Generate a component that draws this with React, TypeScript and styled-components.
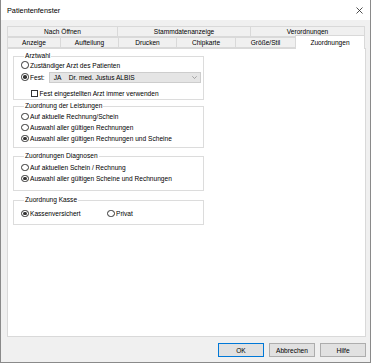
import React from "react";
import styled, { createGlobalStyle } from "styled-components";

const Global = createGlobalStyle`
  html, body { margin: 0; padding: 0; background: #f0f0f0; }
  * { box-sizing: border-box; }
`;

const Window = styled.div`
  width: 371px;
  height: 363px;
  background: #f0f0f0;
  border: 1px solid #8a8a8a;
  border-top: none;
  display: flex;
  flex-direction: column;
  font-family: "Liberation Sans", Arial, sans-serif;
  font-size: 6.6px;
  color: #000;
`;

const TitleBar = styled.div`
  height: 20px;
  background: #fff;
  display: flex;
  align-items: center;
  justify-content: space-between;
  padding: 0 6px 0 6px;
  font-size: 7.3px;
`;

const CloseIcon = styled.svg`
  width: 7px;
  height: 7px;
  margin-right: 1px;
`;

const Body = styled.div`
  flex: 1;
  display: flex;
  flex-direction: column;
  padding: 6px 4px 0 6px;
`;

const TabRow = styled.div`
  display: flex;
  height: 11px;
`;

const Tab = styled.div<{ $w: number; $active?: boolean }>`
  width: ${(p) => p.$w}px;
  flex: none;
  display: flex;
  align-items: center;
  justify-content: center;
  border: 1px solid #d9d9d9;
  border-right: none;
  background: ${(p) => (p.$active ? "#fff" : "#f0f0f0")};
  height: ${(p) => (p.$active ? "14px" : "11px")};
  margin-top: ${(p) => (p.$active ? "-2px" : "0")};
  border-bottom: ${(p) => (p.$active ? "none" : "1px solid #d9d9d9")};
  position: relative;
  z-index: ${(p) => (p.$active ? 2 : 0)};
  padding-bottom: ${(p) => (p.$active ? "1px" : "0")};
  &:last-child { border-right: 1px solid #d9d9d9; }
`;

const Panel = styled.div`
  height: 289px;
  background: #fff;
  border: 1px solid #d9d9d9;
  position: relative;
  z-index: 1;
  padding: 3px 0 0 5px;
  display: flex;
  flex-direction: column;
`;

const Group = styled.fieldset<{ $pb: number; $mt: number }>`
  width: 191px;
  margin: ${(p) => p.$mt}px 0 0 0;
  padding: 0 0 ${(p) => p.$pb}px 7px;
  border: 1px solid #dcdcdc;
  min-width: 0;
  display: flex;
  flex-direction: column;
`;

const Legend = styled.legend`
  font-size: 6.6px;
  line-height: 8px;
  padding: 0 1px;
  margin-left: 3px;
`;

const Row = styled.div<{ $h?: number; $mt?: number; $indent?: number }>`
  display: flex;
  align-items: center;
  height: ${(p) => p.$h ?? 11}px;
  margin-top: ${(p) => p.$mt ?? 0}px;
  padding-left: ${(p) => p.$indent ?? 0}px;
`;

const RadioLabel = styled.label<{ $w?: number }>`
  display: flex;
  align-items: center;
  gap: 1.5px;
  white-space: nowrap;
  width: ${(p) => (p.$w ? `${p.$w}px` : "auto")};
`;

const RadioCircle = styled.span<{ $on?: boolean }>`
  width: 7.5px;
  height: 7.5px;
  border-radius: 50%;
  border: 1px solid #333;
  background: #fff;
  display: flex;
  align-items: center;
  justify-content: center;
  flex: none;
  &::after {
    content: "";
    width: 3.5px;
    height: 3.5px;
    border-radius: 50%;
    background: ${(p) => (p.$on ? "#333" : "transparent")};
  }
`;

const CheckBox = styled.span`
  width: 7px;
  height: 7px;
  border: 1px solid #333;
  background: #fff;
  flex: none;
`;

const Select = styled.div`
  margin-left: 4px;
  width: 152px;
  height: 11px;
  background: #e5e5e5;
  border: 1px solid #cdcdcd;
  display: flex;
  align-items: center;
  padding-left: 4px;
  padding-right: 3px;
`;

const SelCode = styled.span`
  width: 15px;
`;

const SelName = styled.span`
  flex: 1;
`;

const Chevron = styled.svg`
  width: 5px;
  height: 3px;
`;

const ButtonBar = styled.div`
  display: flex;
  justify-content: flex-end;
  gap: 5px;
  margin-top: 6px;
`;

const Button = styled.div<{ $primary?: boolean }>`
  width: 46px;
  height: 14px;
  background: #e1e1e1;
  border: 1px solid ${(p) => (p.$primary ? "#0078d7" : "#adadad")};
  display: flex;
  align-items: center;
  justify-content: center;
`;

function Radio({ on, label, w }: { on?: boolean; label: string; w?: number }) {
  return (
    <RadioLabel $w={w}>
      <RadioCircle $on={on} />
      <span>{label}</span>
    </RadioLabel>
  );
}

export default function App() {
  return (
    <>
      <Global />
      <Window>
        <TitleBar>
          <span>Patientenfenster</span>
          <CloseIcon viewBox="0 0 7 7">
            <path d="M0.5 0.5 L6.5 6.5 M6.5 0.5 L0.5 6.5" stroke="#222" strokeWidth="0.8" />
          </CloseIcon>
        </TitleBar>
        <Body>
          <TabRow>
            <Tab $w={110}>Nach Öffnen</Tab>
            <Tab $w={133}>Stammdatenanzeige</Tab>
            <Tab $w={115}>Verordnungen</Tab>
          </TabRow>
          <TabRow>
            <Tab $w={53}>Anzeige</Tab>
            <Tab $w={58}>Aufteilung</Tab>
            <Tab $w={58}>Drucken</Tab>
            <Tab $w={59}>Chipkarte</Tab>
            <Tab $w={60}>Größe/Stil</Tab>
            <Tab $w={70} $active>Zuordnungen</Tab>
          </TabRow>
          <Panel>
            <Group $mt={0} $pb={1}>
              <Legend>Arztwahl</Legend>
              <Row $h={10}>
                <Radio label="Zuständiger Arzt des Patienten" />
              </Row>
              <Row $h={12} $mt={1}>
                <Radio on label="Fest:" />
                <Select>
                  <SelCode>JA</SelCode>
                  <SelName>Dr. med. Justus ALBIS</SelName>
                  <Chevron viewBox="0 0 5 3">
                    <path d="M0.3 0.3 L2.5 2.5 L4.7 0.3" fill="none" stroke="#888" strokeWidth="0.7" />
                  </Chevron>
                </Select>
              </Row>
              <Row $h={10} $mt={5} $indent={10}>
                <RadioLabel>
                  <CheckBox />
                  <span>Fest eingestellten Arzt immer verwenden</span>
                </RadioLabel>
              </Row>
            </Group>
            <Group $mt={2} $pb={3}>
              <Legend>Zuordnung der Leistungen</Legend>
              <Row $mt={1}><Radio label="Auf aktuelle Rechnung/Schein" /></Row>
              <Row><Radio label="Auswahl aller gültigen Rechnungen" /></Row>
              <Row><Radio on label="Auswahl aller gültigen Rechnungen und Scheine" /></Row>
            </Group>
            <Group $mt={4} $pb={6}>
              <Legend>Zuordnungen Diagnosen</Legend>
              <Row $mt={2}><Radio label="Auf aktuellen Schein / Rechnung" /></Row>
              <Row><Radio on label="Auswahl aller gültigen Scheine und Rechnungen" /></Row>
            </Group>
            <Group $mt={5} $pb={5}>
              <Legend>Zuordnung Kasse</Legend>
              <Row $mt={4}>
                <Radio on label="Kassenversichert" w={86} />
                <Radio label="Privat" />
              </Row>
            </Group>
          </Panel>
          <ButtonBar>
            <Button $primary>OK</Button>
            <Button>Abbrechen</Button>
            <Button>Hilfe</Button>
          </ButtonBar>
        </Body>
      </Window>
    </>
  );
}
